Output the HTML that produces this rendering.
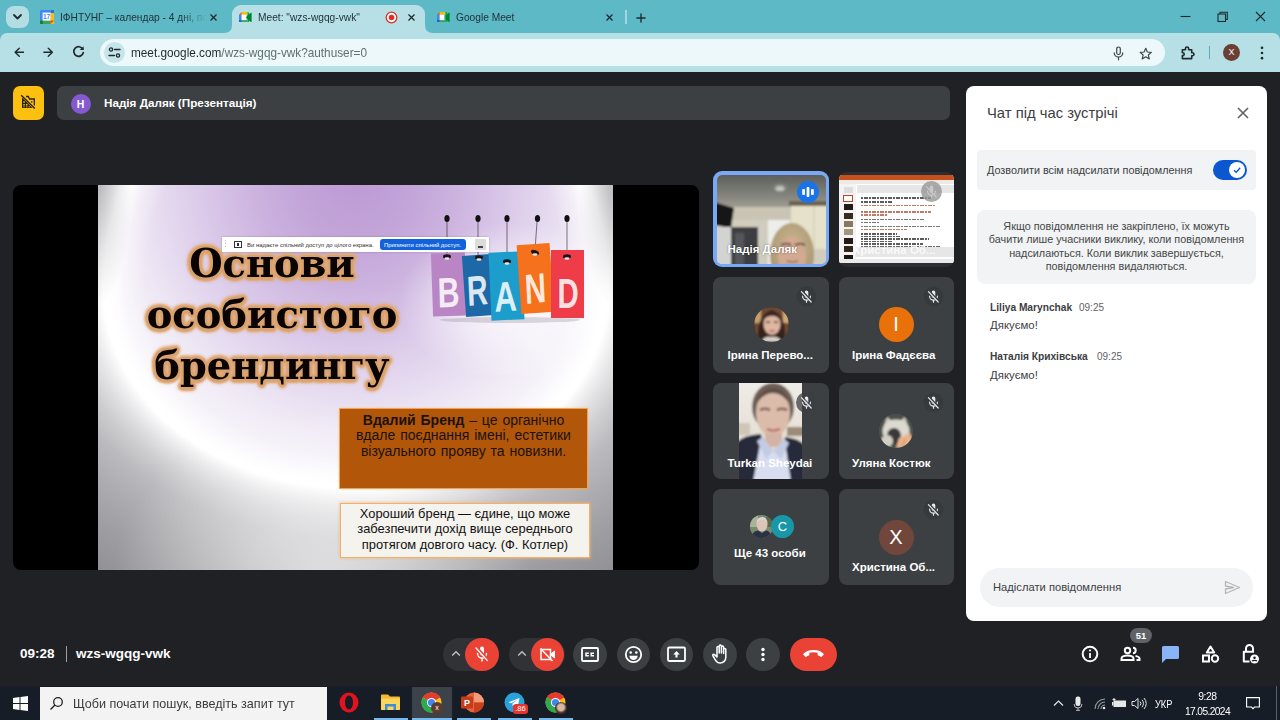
<!DOCTYPE html>
<html lang="uk"><head><meta charset="utf-8"><title>Meet</title>
<style>
*{box-sizing:border-box;margin:0;padding:0}
html,body{width:1280px;height:720px;overflow:hidden;background:#202124;font-family:"Liberation Sans","DejaVu Sans",sans-serif;}
.abs{position:absolute}
#tabstrip{left:0;top:0;width:1280px;height:44px;background:#5db9c5}
#toolbar{left:0;top:33px;width:1280px;height:39.500px;background:#b7e0e6;border-radius:7px 7px 0 0}
#acttab{left:232px;top:5px;width:193px;height:29px;background:#b7e0e6;border-radius:9px 9px 0 0}
#omni{left:100px;top:38.700px;width:1065px;height:27.300px;border-radius:14px;background:#ecf8f9}
.tabtxt{font-size:11.400px;line-height:14px;color:#22333a;top:9.800px;white-space:nowrap;transform:scaleX(0.895);transform-origin:0 0}
#meet{left:0;top:72px;width:1280px;height:615px;background:#202124}
#taskbar{left:0;top:686px;width:1280px;height:34px;background:#161d26}
.tile{background:#3c4043;border-radius:8px;overflow:hidden}
.tname{position:absolute;left:0;width:100%;text-align:center;color:#fff;font-size:12.5px;font-weight:bold;white-space:nowrap}
.mic{position:absolute;width:22px;height:22px;border-radius:50%;background:#2f3235}
.ttl{left:0;width:348px;text-align:center;font-family:"DejaVu Serif","Liberation Serif",serif;font-weight:bold;font-size:40px;line-height:51px;color:#0a0503;white-space:nowrap;transform:scaleX(.96);transform-origin:50% 50%;text-shadow:1.5px 0.0px 1.5px #d9a270,1.1px 1.1px 1.5px #d9a270,0.0px 1.5px 1.5px #d9a270,-1.1px 1.1px 1.5px #d9a270,-1.5px 0.0px 1.5px #d9a270,-1.1px -1.1px 1.5px #d9a270,-0.0px -1.5px 1.5px #d9a270,1.1px -1.1px 1.5px #d9a270,2.6px 0.0px 2px #dca776,2.1px 1.5px 2px #dca776,0.8px 2.5px 2px #dca776,-0.8px 2.5px 2px #dca776,-2.1px 1.5px 2px #dca776,-2.6px 0.0px 2px #dca776,-2.1px -1.5px 2px #dca776,-0.8px -2.5px 2px #dca776,0.8px -2.5px 2px #dca776,2.1px -1.5px 2px #dca776,3.5px 0.0px 3px rgba(226,178,134,.75),3.0px 1.7px 3px rgba(226,178,134,.75),1.8px 3.0px 3px rgba(226,178,134,.75),0.0px 3.5px 3px rgba(226,178,134,.75),-1.7px 3.0px 3px rgba(226,178,134,.75),-3.0px 1.7px 3px rgba(226,178,134,.75),-3.5px 0.0px 3px rgba(226,178,134,.75),-3.0px -1.7px 3px rgba(226,178,134,.75),-1.8px -3.0px 3px rgba(226,178,134,.75),-0.0px -3.5px 3px rgba(226,178,134,.75),1.8px -3.0px 3px rgba(226,178,134,.75),3.0px -1.8px 3px rgba(226,178,134,.75),0 0 7px rgba(226,180,140,.55)}
.nm{color:#fff;font-size:11.500px;line-height:14px;font-weight:bold;white-space:nowrap}
.ctx{font-size:10.800px;line-height:14px;color:#3c4043;white-space:nowrap}
.cb{top:637.800px;width:33.400px;height:33.400px;margin-left:.3px;border-radius:50%;background:#3c4043}
</style></head><body>
<!-- ===== browser chrome ===== -->
<div id="tabstrip" class="abs"></div>
<div id="toolbar" class="abs"></div>
<div id="acttab" class="abs"></div>
<div id="omni" class="abs"></div>

<!-- tab strip items -->
<div class="abs" style="left:6px;top:6px;width:23px;height:22px;border-radius:8px;background:#b3dde3"></div>
<svg class="abs" style="left:12px;top:13px" width="11" height="8" viewBox="0 0 11 8"><path d="M2 2 L5.5 5.5 L9 2" fill="none" stroke="#1f2a2d" stroke-width="1.8" stroke-linecap="round" stroke-linejoin="round"/></svg>
<!-- calendar favicon -->
<svg class="abs" style="left:40px;top:10px" width="14" height="14" viewBox="0 0 14 14"><rect x="0" y="0" width="14" height="14" rx="1.5" fill="#4285f4"/><rect x="0" y="10.5" width="14" height="3.5" fill="#34a853"/><rect x="10.5" y="0" width="3.5" height="14" fill="#fbbc04"/><rect x="0" y="10.5" width="3" height="3.5" fill="#188038"/><rect x="10.5" y="0" width="3.5" height="3" fill="#1a73e8"/><path d="M10.5 10.5h3.5l-3.5 3.5z" fill="#ea4335"/><rect x="2.6" y="2.6" width="8" height="8" fill="#fff"/><text x="6.6" y="9.3" font-size="6.5" font-weight="bold" fill="#4285f4" text-anchor="middle" font-family="Liberation Sans, sans-serif">17</text></svg>
<div class="abs tabtxt" id="t1" style="left:60px;width:164px;overflow:hidden;-webkit-mask-image:linear-gradient(90deg,#000 82%,transparent 100%)">ІФНТУНГ – календар - 4 дні, понеділок</div>
<svg class="abs" style="left:209px;top:13px" width="9" height="9" viewBox="0 0 9 9"><path d="M1.500 1.500L7.500 7.500M7.500 1.500L1.500 7.500" stroke="#1f2a2d" stroke-width="1.300"/></svg>
<!-- active tab curves -->
<svg class="abs" style="left:224px;top:25px" width="8" height="8" viewBox="0 0 8 8"><path d="M0 8 Q8 8 8 0 L8 8Z" fill="#b7e0e6"/></svg>
<svg class="abs" style="left:425px;top:25px" width="8" height="8" viewBox="0 0 8 8"><path d="M8 8 Q0 8 0 0 L0 8Z" fill="#b7e0e6"/></svg>
<!-- meet favicon -->
<svg class="abs meetfav" style="left:239px;top:11.500px" width="12.600" height="10.800" viewBox="0 0 14 12"><rect x="0" y="3" width="3" height="6" fill="#4285f4"/><path d="M0 3L3 0V3Z" fill="#ea4335"/><rect x="3" y="0" width="6.5" height="3" fill="#fbbc04"/><rect x="3" y="9" width="6.5" height="3" fill="#34a853"/><path d="M0 9h3v3H1a1 1 0 0 1-1-1z" fill="#1967d2"/><path d="M9.5 0v4l-1.5 2 1.5 2v4h1a.8.8 0 0 0 .8-.8V.8A.8.8 0 0 0 10.500z" fill="#00ac47"/><path d="M9.5 4L13.300.9q.7-.5.700.4v9.400q0 .9-.7.4L9.500 8l-1.800-2z" fill="#00832d"/><rect x="3" y="3" width="5" height="6" fill="#fff"/></svg>
<div class="abs tabtxt" id="t2" style="left:258px">Meet: "wzs-wgqg-vwk"</div>
<svg class="abs" style="left:385px;top:11px" width="13" height="13" viewBox="0 0 13 13"><circle cx="6.500" cy="6.500" r="5.300" fill="#fff" stroke="#d93025" stroke-width="1.300"/><circle cx="6.500" cy="6.500" r="2.800" fill="#d93025"/></svg>
<svg class="abs" style="left:407px;top:13px" width="9" height="9" viewBox="0 0 9 9"><path d="M1.500 1.500L7.500 7.500M7.500 1.500L1.500 7.500" stroke="#1f2a2d" stroke-width="1.300"/></svg>
<!-- tab 3 -->
<svg class="abs meetfav" style="left:437px;top:11.500px" width="12.600" height="10.800" viewBox="0 0 14 12"><rect x="0" y="3" width="3" height="6" fill="#4285f4"/><path d="M0 3L3 0V3Z" fill="#ea4335"/><rect x="3" y="0" width="6.500" height="3" fill="#fbbc04"/><rect x="3" y="9" width="6.500" height="3" fill="#34a853"/><path d="M0 9h3v3H1a1 1 0 0 1-1-1z" fill="#1967d2"/><path d="M9.500 0v12h1a.8.8 0 0 0 .8-.8V.8A.8.8 0 0 0 10.500 0z" fill="#00ac47"/><path d="M9.500 4L13.300.9q.7-.5.700.4v9.400q0 .9-.7.4L9.500 8z" fill="#00832d"/><rect x="3" y="3" width="5" height="6" fill="#fff"/></svg>
<div class="abs tabtxt" id="t3" style="left:456px">Google Meet</div>
<svg class="abs" style="left:605px;top:13px" width="9" height="9" viewBox="0 0 9 9"><path d="M1.500 1.500L7.500 7.500M7.500 1.500L1.500 7.500" stroke="#1f2a2d" stroke-width="1.300"/></svg>
<div class="abs" style="left:625px;top:10px;width:1.500px;height:14px;background:#a3d5dc"></div>
<svg class="abs" style="left:635.500px;top:12.500px" width="10" height="10" viewBox="0 0 11 11"><path d="M5.500 1V10M1 5.500H10" stroke="#1f2a2d" stroke-width="1.500" stroke-linecap="round"/></svg>
<!-- window controls -->
<svg class="abs" style="left:1180px;top:11px" width="11" height="11" viewBox="0 0 11 11"><path d="M0.500 5.500H10.500" stroke="#1f2a2d" stroke-width="1.100"/></svg>
<svg class="abs" style="left:1217px;top:11px" width="11" height="11" viewBox="0 0 11 11"><rect x="1" y="3" width="7.500" height="7.500" fill="none" stroke="#1f2a2d" stroke-width="1.100"/><path d="M3 3V1.200H10.300V8.500H8.500" fill="none" stroke="#1f2a2d" stroke-width="1.100"/></svg>
<svg class="abs" style="left:1255px;top:11px" width="11" height="11" viewBox="0 0 11 11"><path d="M1 1L10 10M10 1L1 10" stroke="#1f2a2d" stroke-width="1.100"/></svg>
<!-- toolbar items -->
<svg class="abs" style="left:13.500px;top:47px" width="10.500" height="10.500" viewBox="0 0 12 12"><path d="M11 6H1.500M6 1.300L1.300 6L6 10.700" fill="none" stroke="#1f2a2d" stroke-width="1.600" stroke-linecap="round" stroke-linejoin="round"/></svg>
<svg class="abs" style="left:42.500px;top:47px" width="10.500" height="10.500" viewBox="0 0 12 12"><path d="M1 6H10.500M6 1.300L10.700 6L6 10.700" fill="none" stroke="#1f2a2d" stroke-width="1.600" stroke-linecap="round" stroke-linejoin="round"/></svg>
<svg class="abs" style="left:72px;top:45px" width="13" height="13" viewBox="0 0 13 13"><path d="M10.800 4.200A4.800 4.800 0 1 0 11.300 7.500" fill="none" stroke="#1f2a2d" stroke-width="1.700" stroke-linecap="round"/><path d="M11.600 1.200V5H7.800Z" fill="#1f2a2d"/></svg>
<div class="abs" style="left:104px;top:42px;width:21px;height:21px;border-radius:50%;background:#c5e5ea"></div>
<svg class="abs" style="left:108px;top:46px" width="13" height="13" viewBox="0 0 13 13"><circle cx="3" cy="3.500" r="1.600" fill="none" stroke="#1f2a2d" stroke-width="1.300"/><path d="M6.500 3.500H12" stroke="#1f2a2d" stroke-width="1.400" stroke-linecap="round"/><circle cx="10" cy="9.500" r="1.600" fill="none" stroke="#1f2a2d" stroke-width="1.300"/><path d="M1 9.500H6.500" stroke="#1f2a2d" stroke-width="1.400" stroke-linecap="round"/></svg>
<div class="abs" id="url" style="left:131px;top:44.500px;font-size:13px;line-height:16px;color:#1f2a2d;white-space:nowrap;transform:scaleX(0.906);transform-origin:0 0">meet.google.com<span style="color:#5f6f73">/wzs-wgqg-vwk?authuser=0</span></div>
<!-- mic, star -->
<svg class="abs" style="left:1112.500px;top:46px" width="11" height="15" viewBox="0 0 11 15"><rect x="3.700" y="1" width="3.600" height="7.500" rx="1.800" fill="none" stroke="#39474a" stroke-width="1.200"/><path d="M1.200 6.800a4.300 4.300 0 0 0 8.600 0M5.500 11.200V13.800" fill="none" stroke="#39474a" stroke-width="1.200" stroke-linecap="round"/></svg>
<svg class="abs" style="left:1138.500px;top:46.500px" width="13.500" height="13.500" viewBox="0 0 15 15"><path d="M7.500 1.500L9.300 5.600L13.700 6L10.400 8.900L11.400 13.200L7.500 10.900L3.600 13.200L4.600 8.900L1.300 6L5.700 5.600Z" fill="none" stroke="#39474a" stroke-width="1.300" stroke-linejoin="round"/></svg>
<!-- extension puzzle -->
<svg class="abs" style="left:1180px;top:45px" width="15" height="15" viewBox="0 0 16 16"><path d="M2.500 5H5.800V3.800a1.700 1.700 0 0 1 3.400 0V5H12.500V8.200h.8a1.600 1.600 0 0 1 0 3.200H12.500V14.500H2.500V11.300h.5a1.500 1.500 0 0 0 0-3H2.500Z" fill="none" stroke="#1f2a2d" stroke-width="1.700" stroke-linejoin="round"/></svg>
<div class="abs" style="left:1209px;top:46px;width:1px;height:13px;background:#58aebb"></div>
<div class="abs" style="left:1223px;top:44px;width:17px;height:17px;border-radius:50%;background:#6b3f33;color:#fff;font-size:9px;line-height:17px;text-align:center">X</div>
<svg class="abs" style="left:1259.500px;top:46px" width="4" height="14" viewBox="0 0 4 15"><circle cx="2" cy="2" r="1.400" fill="#1f2a2d"/><circle cx="2" cy="7.500" r="1.400" fill="#1f2a2d"/><circle cx="2" cy="13" r="1.400" fill="#1f2a2d"/></svg>
<!-- ===== meet ===== -->
<div id="meet" class="abs"></div>

<!-- meet top bar -->
<div class="abs" style="left:13px;top:86px;width:31px;height:34px;border-radius:7px;background:#fcc011"></div>
<svg class="abs" style="left:20px;top:94px" width="17" height="16" viewBox="0 0 17 16"><path d="M2 3.500V14H12.500Z" fill="#2a2206"/><g fill="#fcc011"><rect x="3.300" y="7.300" width="1.500" height="1.500"/><rect x="3.300" y="10" width="1.500" height="1.500"/><rect x="6" y="10" width="1.500" height="1.500"/><rect x="3.300" y="12.400" width="1.500" height=".9"/><rect x="6" y="12.400" width="1.500" height=".9"/><rect x="8.600" y="12.400" width="1.500" height=".9"/></g><path d="M6 2.500H8.300L9.500 5H14.300V11.500" fill="none" stroke="#2a2206" stroke-width="1.300"/><rect x="11" y="7.200" width="1.400" height="1.400" fill="#2a2206"/><path d="M1.200 1.200L14.800 14.600" stroke="#2a2206" stroke-width="1.400"/></svg>
<div class="abs" style="left:57px;top:86px;width:893px;height:34px;border-radius:7px;background:#3c4043"></div>
<div class="abs" style="left:70.500px;top:93.500px;width:20px;height:20px;border-radius:50%;background:#8559cf;color:#fff;font-size:10.500px;font-weight:bold;line-height:20px;text-align:center">Н</div>
<div class="abs" id="pres" style="left:104px;top:96px;font-size:11.700px;font-weight:bold;color:#fff;white-space:nowrap;line-height:14px">Надія Даляк (Презентація)</div>
<!-- presentation tile -->
<div class="abs" id="ptile" style="left:13px;top:185px;width:686px;height:385px;border-radius:8px;background:#000;overflow:hidden">
<div class="abs" id="slide" style="left:85px;top:0;width:515px;height:385px;overflow:hidden;background:radial-gradient(ellipse 300px 330px at 258px -10px,#bc99d4 0%,#c3a5d9 20%,#ccb3df 34%,#d9c7e8 50%,#e6dbf0 66%,#f0eaf5 78%,#f7f4fa 90%,#fcfbfd 100%)">
<div class="abs" style="left:0;top:0;width:515px;height:105px;background:radial-gradient(ellipse 251px 282px at 258px 105px,rgba(255,255,255,0) 0%,rgba(255,255,255,0) 84%,rgba(255,255,255,.4) 92%,rgba(255,255,255,.88) 96.500%,#fff 98.500%,#fff 100.500%,#f2f2f3 104%,#e2e2e4 109%,#cfcfd2 116%,#bbbbbf 126%,#acacb0 140%,#9f9fa3 155%,#8e8d92 180%)"></div>
<div class="abs" style="left:0;top:105px;width:515px;height:280px;background:radial-gradient(ellipse 251px 198px at 258px 0px,rgba(255,255,255,0) 0%,rgba(255,255,255,0) 84%,rgba(255,255,255,.4) 92%,rgba(255,255,255,.88) 96.500%,#fff 98.500%,#fff 100.500%,#f2f2f3 104%,#e2e2e4 109%,#cfcfd2 116%,#bbbbbf 126%,#acacb0 140%,#9f9fa3 155%,#8e8d92 180%)"></div>
<div class="abs" style="left:0;top:0;width:515px;height:385px;background:radial-gradient(ellipse 210px 170px at 225px 395px,rgba(255,255,255,.62) 0%,rgba(255,255,255,.45) 35%,rgba(255,255,255,0) 100%),radial-gradient(ellipse 34px 120px at 0 0,rgba(90,90,100,.3) 0%,rgba(90,90,100,0) 100%),radial-gradient(ellipse 34px 120px at 515px 0,rgba(90,90,100,.3) 0%,rgba(90,90,100,0) 100%)"></div>
<!-- title -->
<div class="abs ttl" id="tl1" style="top:52px">Основи<br>особистого<br>брендингу</div>
<!-- brand image -->
<div class="abs" style="left:300px;top:30px;width:230px;height:160px;background:radial-gradient(ellipse 50% 50% at 50% 55%,rgba(255,255,255,.8) 0%,rgba(255,255,255,.55) 45%,rgba(255,255,255,0) 100%)"></div>
<svg class="abs" style="left:325px;top:25px" width="180" height="120" viewBox="423 210 180 120" font-family="Liberation Sans, sans-serif" font-weight="bold">
<g stroke="#2a2228" stroke-width="0.600"><path d="M447 222V256M478 222V258M507 222V262M537 222L535 250M567 222V256"/></g>
<g fill="#111"><ellipse cx="447" cy="218.500" rx="2.600" ry="3.600"/><ellipse cx="478" cy="218.500" rx="2.600" ry="3.600"/><ellipse cx="507" cy="218.500" rx="2.600" ry="3.600"/><ellipse cx="537.500" cy="218.500" rx="2.600" ry="3.600"/><ellipse cx="567" cy="218.500" rx="2.600" ry="3.600"/></g>
<ellipse cx="510" cy="320" rx="70" ry="3" fill="rgba(120,110,130,.25)"/>
<rect x="432" y="253" width="34" height="63" fill="#b985c5" transform="rotate(-2 449 285)"/>
<rect x="464" y="255" width="28" height="61" fill="#1d69a8" transform="rotate(-4 478 286)"/>
<rect x="490" y="252" width="33" height="68" fill="#1c9dcc" transform="rotate(-2.500 506 286)"/>
<rect x="519" y="244" width="33" height="69" fill="#f5711b" transform="rotate(-4 535 279)"/>
<rect x="551" y="250" width="33" height="68" fill="#ee3c48"/>
<g fill="#fff" fill-opacity=".86" font-size="42" text-anchor="middle">
<text transform="translate(449 307) scale(.72 1) rotate(-2)">B</text>
<text transform="translate(478 305) scale(.68 1) rotate(-4)">R</text>
<text transform="translate(506 311) scale(.74 1) rotate(-2.500)">A</text>
<text transform="translate(536 303) scale(.7 1) rotate(-4)">N</text>
<text transform="translate(568 308) scale(.7 1)">D</text>
</g>
<g fill="#1a1518"><ellipse cx="447" cy="256.500" rx="4" ry="2.300"/><ellipse cx="479" cy="257.500" rx="4" ry="2.300"/><ellipse cx="507" cy="261.500" rx="4" ry="2.300"/><ellipse cx="535" cy="252.500" rx="4.200" ry="2.300" transform="rotate(20 535 252.500)"/><ellipse cx="567" cy="256.500" rx="4" ry="2.300"/></g>
<g fill="#e8e4e8"><ellipse cx="447" cy="258.500" rx="2.600" ry="1.300"/><ellipse cx="479" cy="259.500" rx="2.600" ry="1.300"/><ellipse cx="507" cy="263.500" rx="2.600" ry="1.300"/><ellipse cx="535" cy="254.500" rx="2.600" ry="1.300"/><ellipse cx="567" cy="258.500" rx="2.600" ry="1.300"/></g>
</svg>
<!-- share bar -->
<div class="abs" style="left:124px;top:52px;width:267px;height:15px;background:#fff;box-shadow:0 0 2px rgba(0,0,0,.25)"></div>
<div class="abs" style="left:136px;top:56px;width:8px;height:6.500px;border:1px solid #333"></div><div class="abs" style="left:139px;top:58px;width:2px;height:2.500px;background:#333"></div><div class="abs" style="left:127px;top:55px;width:1px;height:9px;background:repeating-linear-gradient(180deg,#bbb 0 1px,transparent 1px 3px)"></div>
<div class="abs" id="sh1" style="left:149px;top:55.500px;font-size:5.950px;line-height:8px;color:#333;white-space:nowrap">Ви надаєте спільний доступ до цілого екрана.</div>
<div class="abs" style="left:282px;top:54px;width:86px;height:11px;border-radius:3px;background:#1263db"></div>
<div class="abs" id="sh2" style="left:286px;top:55.500px;font-size:5.900px;line-height:8px;color:#fff;white-space:nowrap">Припинити спільний доступ.</div>
<div class="abs" style="left:377px;top:54px;width:11px;height:11px;background:#dcdcdc;border-radius:1px"></div>
<div class="abs" style="left:380px;top:61px;width:5px;height:1.500px;background:#444"></div>
<!-- brown box -->
<div class="abs" style="left:242px;top:224px;width:247px;height:79px;background:#b2570a;box-shadow:0 0 0 1px #f0a452,0 0 3px #f3b46e"></div>
<div class="abs" id="bx1" style="left:247px;top:227.500px;width:237px;font-size:14px;line-height:15.600px;color:#1a120b;word-spacing:1px;text-align:center;white-space:nowrap"><b>Вдалий Бренд</b> – це органічно<br>вдале поєднання імені, естетики<br>візуального прояву та новизни.</div>
<!-- white box -->
<div class="abs" style="left:242px;top:318px;width:250px;height:55px;background:#f4f3ee;border:1.500px solid #f0b170;box-shadow:0 0 3px #f3b46e"></div>
<div class="abs" id="bx2" style="left:252px;top:321px;width:230px;font-size:12.900px;line-height:15.300px;color:#111;text-align:center;white-space:nowrap">Хороший бренд — єдине, що може<br>забезпечити дохід вище середнього<br>протягом довгого часу. (Ф. Котлер)</div>
</div>
</div>
<!-- ===== tiles ===== -->
<!-- tile 1: Nadia video -->
<div class="abs tile" style="left:713px;top:171px;width:116px;height:96px;border-radius:9px;background:#78a8f6">
 <div class="abs" style="left:3.500px;top:3.500px;width:109px;height:89px;border-radius:5px;overflow:hidden;background:#d8d3c2">
 <svg class="abs" style="left:-3px;top:-3px" width="115" height="95" viewBox="-3 -3 115 95">
  <defs><linearGradient id="ceil" x1="0" y1="0" x2="0" y2="1"><stop offset="0" stop-color="#585a56"/><stop offset=".55" stop-color="#7b7d76"/><stop offset="1" stop-color="#9f9e94"/></linearGradient>
  <filter id="bl1" x="-5%" y="-5%" width="110%" height="110%"><feGaussianBlur stdDeviation="0.9"/></filter>
  <radialGradient id="hair1" cx=".5" cy=".4" r=".6"><stop offset="0" stop-color="#cdb994"/><stop offset="1" stop-color="#a8946f"/></radialGradient></defs>
  <g filter="url(#bl1)">
  <rect x="-3" y="-3" width="115" height="95" fill="#d2cdbc"/>
  <rect x="-3" y="-3" width="115" height="36" fill="url(#ceil)"/>
  <path d="M14 32H74V45H14Z" fill="#c9c4b3"/>
  <ellipse cx="63" cy="13" rx="7.500" ry="4.800" fill="#7f827b"/><ellipse cx="63" cy="13.500" rx="4.500" ry="2.600" fill="#c2c4bb"/>
  <path d="M-3 27L17 33L14 53L-3 50Z" fill="#121214"/>
  <rect x="72" y="26" width="40" height="5" fill="#6d624f"/>
  <rect x="74" y="31" width="38" height="43" fill="#e5e1ca"/>
  <path d="M97 31V74" stroke="#cfcab2" stroke-width="1"/>
  <rect x="74" y="74" width="38" height="18" fill="#d0cdbf"/>
  <rect x="-3" y="52" width="17" height="40" fill="#d3d4d1"/>
  <rect x="14" y="52" width="27" height="40" fill="#3c3d42"/>
  <rect x="18" y="58" width="9" height="34" fill="#55565c"/>
  <rect x="41" y="45" width="10" height="47" fill="#cfccc0"/>
  <rect x="51" y="45" width="22" height="47" fill="#ededea"/>
  <ellipse cx="75" cy="80" rx="22" ry="32" fill="url(#hair1)"/>
  <ellipse cx="75" cy="82" rx="14" ry="20" fill="#d2a991"/>
  <path d="M64 70Q69 67.500 74 70M78 70Q83 67.500 88 70" stroke="#6b5044" stroke-width="2" fill="none"/>
  <path d="M70 86Q75 88 81 86" stroke="#9c6b60" stroke-width="1.500" fill="none"/>
  </g>
 </svg>
 </div>
 <svg class="abs" style="left:83.500px;top:10px" width="22" height="22" viewBox="0 0 22 22"><circle cx="11" cy="11" r="11" fill="#1a73e8"/><rect x="5.200" y="8" width="2.800" height="6" rx="1" fill="#fff"/><rect x="9.600" y="6" width="2.800" height="10" rx="1" fill="#fff"/><rect x="14" y="8" width="2.800" height="6" rx="1" fill="#fff"/></svg>
 <div class="abs nm" id="n1" style="left:14.500px;top:71.200px;text-shadow:0 0 2px rgba(0,0,0,.5)">Надія Даляк</div>
</div>
<!-- tile 2: screen share thumb -->
<div class="abs tile" style="left:839px;top:172px;width:115px;height:95px;background:#2c2e31">
 <div class="abs" style="left:0;top:3px;width:115px;height:88px;background:#fff;overflow:hidden">
  <div class="abs" style="left:0;top:0;width:115px;height:5px;background:#c5501e"></div>
  <div class="abs" style="left:0;top:5px;width:115px;height:4px;background:#efe9e6"></div>
  <div class="abs" style="left:18px;top:10px;width:97px;height:8px;background:#e6e6e6"></div>
  <div class="abs" style="left:0;top:9px;width:17px;height:79px;background:#f3f3f3"></div>
  <div class="abs" style="left:5px;top:12px;width:9px;height:6px;background:#ddd"></div>
  <div class="abs" style="left:4px;top:20px;width:10px;height:7px;background:#fff;border:1px solid #b5482a"></div>
  <div class="abs" style="left:5px;top:29px;width:9px;height:6px;background:#221a15"></div>
  <div class="abs" style="left:5px;top:38px;width:9px;height:6px;background:#3a2a1c"></div>
  <div class="abs" style="left:5px;top:46px;width:9px;height:6px;background:#8a7763"></div>
  <div class="abs" style="left:5px;top:54px;width:9px;height:6px;background:#a39480"></div>
  <div class="abs" style="left:5px;top:63px;width:9px;height:6px;background:#241c14"></div>
  <div class="abs" style="left:5px;top:71px;width:9px;height:6px;background:#33271c"></div>
  <div class="abs" style="left:5px;top:80px;width:9px;height:5px;background:#1c1612"></div>
  <div class="abs" style="left:22px;top:22px;width:70px;height:2px;background:repeating-linear-gradient(90deg,#333 0 2.500px,transparent 2.500px 3.500px,#333 3.500px 7px,transparent 7px 8px);opacity:.8"></div>
  <div class="abs" style="left:22px;top:26px;width:32px;height:2px;background:repeating-linear-gradient(90deg,#333 0 2.500px,transparent 2.500px 3.500px,#333 3.500px 7px,transparent 7px 8px);opacity:.8"></div>
  <div class="abs" style="left:22px;top:29.500px;width:74px;height:1.500px;background:repeating-linear-gradient(90deg,#b4553f 0 2.500px,transparent 2.500px 3.500px,#b4553f 3.500px 7px,transparent 7px 8px);opacity:.8"></div>
  <div class="abs" style="left:22px;top:36px;width:70px;height:1.500px;background:repeating-linear-gradient(90deg,#b4553f 0 2.500px,transparent 2.500px 3.500px,#b4553f 3.500px 7px,transparent 7px 8px);opacity:.8"></div>
  <div class="abs" style="left:22px;top:39px;width:26px;height:1.500px;background:repeating-linear-gradient(90deg,#b4553f 0 2.500px,transparent 2.500px 3.500px,#b4553f 3.500px 7px,transparent 7px 8px);opacity:.8"></div>
  <div class="abs" style="left:22px;top:43.500px;width:64px;height:1.500px;background:repeating-linear-gradient(90deg,#555 0 2.500px,transparent 2.500px 3.500px,#555 3.500px 7px,transparent 7px 8px);opacity:.8"></div>
  <div class="abs" style="left:22px;top:46.500px;width:18px;height:1.500px;background:repeating-linear-gradient(90deg,#555 0 2.500px,transparent 2.500px 3.500px,#555 3.500px 7px,transparent 7px 8px);opacity:.8"></div>
  <div class="abs" style="left:22px;top:50.500px;width:80px;height:1.500px;background:repeating-linear-gradient(90deg,#555 0 2.500px,transparent 2.500px 3.500px,#555 3.500px 7px,transparent 7px 8px);opacity:.8"></div>
  <div class="abs" style="left:22px;top:53.500px;width:46px;height:1.500px;background:repeating-linear-gradient(90deg,#b4553f 0 2.500px,transparent 2.500px 3.500px,#b4553f 3.500px 7px,transparent 7px 8px);opacity:.8"></div>
  <div class="abs" style="left:22px;top:58px;width:36px;height:1.500px;background:repeating-linear-gradient(90deg,#333 0 2.500px,transparent 2.500px 3.500px,#333 3.500px 7px,transparent 7px 8px);opacity:.8"></div>
  <div class="abs" style="left:22px;top:60.500px;width:40px;height:1.500px;background:repeating-linear-gradient(90deg,#333 0 2.500px,transparent 2.500px 3.500px,#333 3.500px 7px,transparent 7px 8px);opacity:.8"></div>
  <div class="abs" style="left:22px;top:63px;width:68px;height:1.500px;background:repeating-linear-gradient(90deg,#333 0 2.500px,transparent 2.500px 3.500px,#333 3.500px 7px,transparent 7px 8px);opacity:.8"></div>
  <div class="abs" style="left:22px;top:65.500px;width:32px;height:1.500px;background:repeating-linear-gradient(90deg,#333 0 2.500px,transparent 2.500px 3.500px,#333 3.500px 7px,transparent 7px 8px);opacity:.8"></div>
  <div class="abs" style="left:22px;top:68px;width:62px;height:1.500px;background:repeating-linear-gradient(90deg,#333 0 2.500px,transparent 2.500px 3.500px,#333 3.500px 7px,transparent 7px 8px);opacity:.8"></div>
  <div class="abs" style="left:22px;top:70.500px;width:80px;height:1.500px;background:repeating-linear-gradient(90deg,#444 0 2.500px,transparent 2.500px 3.500px,#444 3.500px 7px,transparent 7px 8px);opacity:.8"></div>
  <div class="abs" style="left:17px;top:72px;width:98px;height:10px;background:rgba(225,225,225,.82)"></div>
  <div class="abs" style="left:0;top:84px;width:115px;height:4px;background:#e9e9e9"></div>
 </div>
 <svg class="abs" style="left:81.7px;top:8.7px" width="21" height="21" viewBox="0 0 21 21"><circle cx="10.500" cy="10.500" r="10.500" fill="rgba(150,150,150,.8)"/><path d="M8.700 6.300a1.800 1.800 0 0 1 3.600 0v4a1.800 1.800 0 0 1-3.600 0z" fill="#c9c9c9"/><path d="M6.600 10.200a3.900 3.900 0 0 0 7.800 0M10.500 14.200V16.200" fill="none" stroke="#c9c9c9" stroke-width="1.200" stroke-linecap="round"/><path d="M5.400 5.600L15.200 16" stroke="#c9c9c9" stroke-width="1.200" stroke-linecap="round"/></svg>
 <div class="abs nm" id="n2" style="left:13.500px;top:70.500px;color:rgba(255,255,255,.78)">Христина Об...</div>
</div>
<!-- tile 3 -->
<div class="abs tile" style="left:713px;top:277px;width:116px;height:96px">
 <div class="abs" style="left:40.500px;top:30px;width:35px;height:35px;border-radius:50%;overflow:hidden;background:#3a2620">
 <svg class="abs" style="left:0;top:0" width="35" height="35" viewBox="0 0 35 35"><defs><filter id="bl3"><feGaussianBlur stdDeviation="0.900"/></filter></defs>
 <g filter="url(#bl3)"><rect width="35" height="35" fill="#6e4c36"/>
 <rect x="0" y="0" width="7" height="16" fill="#c8a06b"/><rect x="29" y="2" width="6" height="14" fill="#d1ab72"/>
 <path d="M4 35Q2 8 17 3Q33 6 31 35Z" fill="#35231e"/>
 <ellipse cx="18" cy="17" rx="8.500" ry="11" fill="#dfb7a3"/>
 <path d="M9 14Q11 4 19 5Q27 5 27 15Q24 8 18 9Q12 9 9 14Z" fill="#3b2721"/>
 <path d="M12 15.500Q14 14.500 16 15.500M20 15.500Q22 14.500 24 15.500" stroke="#4a3029" stroke-width="1.500" fill="none"/>
 <path d="M15.500 23.500Q18 24.500 20.500 23.500" stroke="#b0605f" stroke-width="1.400" fill="none"/>
 <path d="M7 35Q10 29 17 30Q25 29 28 35Z" fill="#d7cfc6"/>
 </g></svg>
 </div>
 <svg class="abs" style="left:83.2px;top:9.2px" width="21" height="21" viewBox="0 0 21 21"><circle cx="10.500" cy="10.500" r="10" fill="#373a3d"/><path d="M8.700 6.300a1.800 1.800 0 0 1 3.600 0v4a1.800 1.800 0 0 1-3.600 0z" fill="#e8eaed"/><path d="M6.600 10.200a3.900 3.900 0 0 0 7.800 0M10.500 14.200V16.200" fill="none" stroke="#e8eaed" stroke-width="1.200" stroke-linecap="round"/><path d="M5.800 5.200L15.600 15.600" stroke="#373a3d" stroke-width="2.600"/><path d="M5.400 5.600L15.200 16" stroke="#e8eaed" stroke-width="1.200" stroke-linecap="round"/></svg>
 <div class="abs nm" id="n3" style="left:14.500px;top:71px">Ірина Перево...</div>
</div>
<!-- tile 4 -->
<div class="abs tile" style="left:839px;top:277px;width:115px;height:96px">
 <div class="abs" style="left:39.500px;top:30px;width:35px;height:35px;border-radius:50%;background:#e8710a;color:#fff;font-size:20px;line-height:35px;text-align:center">І</div>
 <svg class="abs" style="left:83.7px;top:9.2px" width="21" height="21" viewBox="0 0 21 21"><circle cx="10.500" cy="10.500" r="10" fill="#373a3d"/><path d="M8.700 6.300a1.800 1.800 0 0 1 3.600 0v4a1.800 1.800 0 0 1-3.600 0z" fill="#e8eaed"/><path d="M6.600 10.200a3.900 3.900 0 0 0 7.800 0M10.500 14.200V16.200" fill="none" stroke="#e8eaed" stroke-width="1.200" stroke-linecap="round"/><path d="M5.800 5.200L15.600 15.600" stroke="#373a3d" stroke-width="2.600"/><path d="M5.400 5.600L15.200 16" stroke="#e8eaed" stroke-width="1.200" stroke-linecap="round"/></svg>
 <div class="abs nm" id="n4" style="left:13px;top:71px">Ірина Фадєєва</div>
</div>
<!-- tile 5: Turkan video -->
<div class="abs tile" style="left:713px;top:383px;width:116px;height:96px">
 <div class="abs" style="left:26px;top:0;width:63px;height:96px;overflow:hidden;background:#e8e5df">
 <svg class="abs" style="left:-3px;top:-3px" width="69" height="102" viewBox="-3 -3 69 102">
  <defs><filter id="bl5" x="-10%" y="-10%" width="120%" height="120%"><feGaussianBlur stdDeviation="1.300"/></filter>
  <linearGradient id="bg5" x1="0" y1="0" x2="0" y2="1"><stop offset="0" stop-color="#efede8"/><stop offset=".5" stop-color="#e6e1d8"/><stop offset="1" stop-color="#d8d0c4"/></linearGradient></defs>
  <g filter="url(#bl5)">
  <rect x="-3" y="-3" width="69" height="102" fill="url(#bg5)"/>
  <rect x="48" y="44" width="18" height="9" fill="#9b8b78"/>
  <rect x="-3" y="40" width="14" height="12" fill="#cfc6b8"/>
  <ellipse cx="34" cy="24" rx="21" ry="24" fill="#6e5f57"/>
  <ellipse cx="34" cy="30" rx="17" ry="24" fill="#dbbcab"/>
  <path d="M17 22Q20 6 34 5Q48 6 51 22Q44 10 34 10Q24 10 17 22Z" fill="#5f5049"/>
  <path d="M21 27Q26 24.500 31 27M38 27Q43 24.500 48 27" stroke="#6a4f46" stroke-width="2.600" fill="none" opacity=".8"/>
  <path d="M28 46Q34 49 41 46" stroke="#b4696b" stroke-width="2.200" fill="none"/>
  <rect x="26" y="50" width="17" height="14" fill="#d3b3a3"/>
  <path d="M-3 60Q4 52 22 51L30 99H-3Z" fill="#262b3a"/>
  <path d="M66 62Q58 55 46 54L40 99H66Z" fill="#262b3a"/>
  <path d="M22 56L34 70L46 58L52 99H14Z" fill="#d8def0"/>
  <path d="M24 54L34 68L27 76L18 58Z" fill="#c3cbe4"/><path d="M45 56L34 68L42 76L50 60Z" fill="#c3cbe4"/>
  </g>
 </svg>
 </div>
 <svg class="abs" style="left:83.2px;top:9.2px" width="21" height="21" viewBox="0 0 21 21"><circle cx="10.500" cy="10.500" r="10.500" fill="rgba(60,62,66,.75)"/><path d="M8.700 6.300a1.800 1.800 0 0 1 3.600 0v4a1.800 1.800 0 0 1-3.600 0z" fill="#e8eaed"/><path d="M6.600 10.200a3.900 3.900 0 0 0 7.800 0M10.500 14.200V16.200" fill="none" stroke="#e8eaed" stroke-width="1.200" stroke-linecap="round"/><path d="M5.800 5.200L15.600 15.600" stroke="rgba(60,62,66,.75)" stroke-width="2.600"/><path d="M5.400 5.600L15.200 16" stroke="#e8eaed" stroke-width="1.200" stroke-linecap="round"/></svg>
 <div class="abs nm" id="n5" style="left:14.500px;top:72.500px">Turkan Sheydai</div>
</div>
<!-- tile 6 -->
<div class="abs tile" style="left:839px;top:383px;width:115px;height:96px">
 <div class="abs" style="left:39.500px;top:31px;width:34px;height:34px;border-radius:50%;overflow:hidden;background:#4a4f49">
 <svg class="abs" style="left:0;top:0" width="34" height="34" viewBox="0 0 34 34"><defs><filter id="bl6"><feGaussianBlur stdDeviation="0.900"/></filter></defs>
 <g filter="url(#bl6)"><rect width="34" height="34" fill="#4b504a"/>
 <path d="M5 12L8 3L14 8Z" fill="#cfcdc3"/><path d="M29 12L26 3L20 8Z" fill="#cfcdc3"/>
 <ellipse cx="17" cy="17" rx="13.500" ry="11.500" fill="#dcdad0"/>
 <ellipse cx="15" cy="22" rx="7" ry="8" fill="#3b3937"/>
 <ellipse cx="8" cy="27" rx="6" ry="6" fill="#d2d0c6"/>
 <path d="M17 34L20 24L31 19L34 26V34Z" fill="#ebb48c"/>
 <path d="M23 34L26 25" stroke="#c98f6c" stroke-width="1.200"/>
 </g></svg>
 </div>
 <svg class="abs" style="left:83.7px;top:9.2px" width="21" height="21" viewBox="0 0 21 21"><circle cx="10.500" cy="10.500" r="10" fill="#373a3d"/><path d="M8.700 6.300a1.800 1.800 0 0 1 3.600 0v4a1.800 1.800 0 0 1-3.600 0z" fill="#e8eaed"/><path d="M6.600 10.200a3.900 3.900 0 0 0 7.800 0M10.500 14.200V16.200" fill="none" stroke="#e8eaed" stroke-width="1.200" stroke-linecap="round"/><path d="M5.800 5.200L15.600 15.600" stroke="#373a3d" stroke-width="2.600"/><path d="M5.400 5.600L15.200 16" stroke="#e8eaed" stroke-width="1.200" stroke-linecap="round"/></svg>
 <div class="abs nm" id="n6" style="left:13px;top:72.500px">Уляна Костюк</div>
</div>
<!-- tile 7 -->
<div class="abs tile" style="left:713px;top:489px;width:116px;height:96px">
 <div class="abs" style="left:36.500px;top:25.500px;width:23px;height:23px;border-radius:50%;overflow:hidden;background:#6d7a5c">
 <svg class="abs" style="left:0;top:0" width="23" height="23" viewBox="0 0 23 23"><defs><filter id="bl7"><feGaussianBlur stdDeviation="0.700"/></filter></defs>
 <g filter="url(#bl7)"><rect width="23" height="23" fill="#7c8a6c"/><rect x="0" y="0" width="8" height="12" fill="#a9b39a"/><rect x="16" y="2" width="7" height="10" fill="#5c6b4c"/>
 <ellipse cx="12" cy="9.500" rx="5.500" ry="7" fill="#ddc4b6"/>
 <path d="M6.500 8Q7 2 12 2Q17 2 17.500 8Q15 4.500 12 4.500Q9 4.500 6.500 8Z" fill="#d6d6d4"/>
 <path d="M1 23Q2 16 8 15.500L12 18L16 15.500Q21 16 22 23Z" fill="#2a3146"/>
 </g></svg>
 </div>
 <div class="abs" style="left:58px;top:25.500px;width:23px;height:23px;border-radius:50%;background:#1797a8;color:#fff;font-size:13px;line-height:23px;text-align:center">С</div>
 <div class="abs nm" id="n7" style="left:21px;top:57.200px">Ще 43 особи</div>
</div>
<!-- tile 8 -->
<div class="abs tile" style="left:839px;top:489px;width:115px;height:96px">
 <div class="abs" style="left:39.500px;top:31px;width:35px;height:35px;border-radius:50%;background:#70473a;color:#fff;font-size:20px;line-height:35px;text-align:center">Х</div>
 <svg class="abs" style="left:83.7px;top:9.7px" width="21" height="21" viewBox="0 0 21 21"><circle cx="10.500" cy="10.500" r="10" fill="#373a3d"/><path d="M8.700 6.300a1.800 1.800 0 0 1 3.600 0v4a1.800 1.800 0 0 1-3.600 0z" fill="#e8eaed"/><path d="M6.600 10.200a3.900 3.900 0 0 0 7.800 0M10.500 14.200V16.200" fill="none" stroke="#e8eaed" stroke-width="1.200" stroke-linecap="round"/><path d="M5.800 5.200L15.600 15.600" stroke="#373a3d" stroke-width="2.600"/><path d="M5.400 5.600L15.200 16" stroke="#e8eaed" stroke-width="1.200" stroke-linecap="round"/></svg>
 <div class="abs nm" id="n8" style="left:13px;top:71.200px">Христина Об...</div>
</div>

<!-- ===== chat ===== -->
<div class="abs" style="left:966px;top:85.600px;width:301px;height:535.600px;border-radius:8px;background:#fff"></div>
<div class="abs" id="ct" style="left:987px;top:104px;font-size:14.800px;line-height:18px;color:#3c4043;white-space:nowrap">Чат під час зустрічі</div>
<svg class="abs" style="left:1237px;top:107px" width="12" height="12" viewBox="0 0 12 12"><path d="M1 1L11 11M11 1L1 11" stroke="#5f6368" stroke-width="1.600"/></svg>
<div class="abs" style="left:977px;top:150px;width:279px;height:40px;border-radius:4px;background:#f1f3f4"></div>
<div class="abs ctx" id="c1" style="left:987px;top:163px">Дозволити всім надсилати повідомлення</div>
<div class="abs" style="left:1213px;top:160px;width:34px;height:20px;border-radius:10px;background:#0b57d0"></div>
<div class="abs" style="left:1229px;top:162px;width:16px;height:16px;border-radius:50%;background:#fff"></div>
<svg class="abs" style="left:1232px;top:165px" width="10" height="10" viewBox="0 0 10 10"><path d="M2 5.200L4.200 7.300L8.200 2.800" fill="none" stroke="#0b57d0" stroke-width="1.300"/></svg>
<div class="abs" style="left:977px;top:210px;width:279px;height:74px;border-radius:8px;background:#f1f3f4"></div>
<div class="abs ctx" id="c2" style="left:977px;top:220px;width:279px;text-align:center;line-height:13.400px;color:#444746">Якщо повідомлення не закріплено, їх можуть<br>бачити лише учасники виклику, коли повідомлення<br>надсилаються. Коли виклик завершується,<br>повідомлення видаляються.</div>
<div class="abs ctx" id="m1" style="left:990px;top:301px;font-size:10.200px;font-weight:bold;color:#3c4043">Liliya Marynchak</div>
<div class="abs ctx" id="m1t" style="left:1079px;top:301px;font-size:10px;color:#5f6368">09:25</div>
<div class="abs ctx" id="m2" style="left:990px;top:318px;font-size:11.400px;color:#3c4043">Дякуємо!</div>
<div class="abs ctx" id="m3" style="left:990px;top:350px;font-size:10.200px;font-weight:bold;color:#3c4043">Наталія Крихівська</div>
<div class="abs ctx" id="m3t" style="left:1097px;top:350px;font-size:10px;color:#5f6368">09:25</div>
<div class="abs ctx" id="m4" style="left:990px;top:367.500px;font-size:11.400px;color:#3c4043">Дякуємо!</div>
<div class="abs" style="left:980px;top:568px;width:273px;height:39px;border-radius:20px;background:#f1f3f4"></div>
<div class="abs" id="ph" style="left:993px;top:580px;font-size:11.200px;line-height:14px;color:#3c4043;white-space:nowrap">Надіслати повідомлення</div>
<svg class="abs" style="left:1224px;top:580px" width="17" height="15" viewBox="0 0 17 15"><path d="M1.500 1.500L15.500 7.500L1.500 13.500V9L9.500 7.500L1.500 6Z" fill="none" stroke="#b4b7ba" stroke-width="1.300" stroke-linejoin="round"/></svg>

<!-- ===== controls ===== -->
<div class="abs" id="clk" style="left:20px;top:646px;font-size:13.500px;line-height:16px;font-weight:bold;color:#fff;white-space:nowrap">09:28</div>
<div class="abs" style="left:65.500px;top:646px;width:1px;height:16px;background:#9aa0a6"></div>
<div class="abs" id="code" style="left:76px;top:646px;font-size:13.500px;line-height:16px;font-weight:bold;color:#fff;white-space:nowrap">wzs-wgqg-vwk</div>
<!-- mic group -->
<div class="abs" style="left:443px;top:638px;width:56px;height:33px;border-radius:17px;background:#303236"></div>
<svg class="abs" style="left:451px;top:650px" width="10" height="7" viewBox="0 0 10 7"><path d="M1.200 5.500L5 1.700L8.800 5.500" fill="none" stroke="#bdc1c6" stroke-width="1.400"/></svg>
<div class="abs" style="left:465.300px;top:637.800px;width:33.400px;height:33.400px;border-radius:50%;background:#ea4335"></div>
<svg class="abs" style="left:473px;top:645px" width="18" height="19" viewBox="0 0 18 19"><path d="M7 3.500a2 2 0 0 1 4 0v5a2 2 0 0 1-4 0z" fill="#fff"/><path d="M4.500 8.500a4.500 4.500 0 0 0 9 0M9 13.200V16" fill="none" stroke="#fff" stroke-width="1.400" stroke-linecap="round"/><path d="M3.600 2.600L14.800 15" stroke="#ea4335" stroke-width="3"/><path d="M3 3L14.200 15.400" stroke="#fff" stroke-width="1.400" stroke-linecap="round"/></svg>
<!-- cam group -->
<div class="abs" style="left:509px;top:638px;width:56px;height:33px;border-radius:17px;background:#303236"></div>
<svg class="abs" style="left:516.500px;top:650px" width="10" height="7" viewBox="0 0 10 7"><path d="M1.200 5.500L5 1.700L8.800 5.500" fill="none" stroke="#bdc1c6" stroke-width="1.400"/></svg>
<div class="abs" style="left:530.800px;top:637.800px;width:33.400px;height:33.400px;border-radius:50%;background:#ea4335"></div>
<svg class="abs" style="left:538px;top:646px" width="19" height="17" viewBox="0 0 19 17"><path d="M3 3.500H12.500V13.500H3Z" fill="none" stroke="#fff" stroke-width="1.500"/><path d="M12.500 8.500L16.500 5V12Z" fill="#fff" stroke="#fff" stroke-width="1" stroke-linejoin="round"/><path d="M2.500 2.500L14.500 15" stroke="#fff" stroke-width="1.500"/></svg>
<!-- cc -->
<div class="abs cb" style="left:573px"></div>
<svg class="abs" style="left:581px;top:647px" width="18" height="15" viewBox="0 0 18 15"><rect x="1" y="1" width="16" height="13" rx="1" fill="none" stroke="#fff" stroke-width="1.800"/><path d="M7.800 6.200H5V8.800H7.800M13 6.200H10.200V8.800H13" fill="none" stroke="#fff" stroke-width="1.500"/></svg>
<!-- emoji -->
<div class="abs cb" style="left:616.500px"></div>
<svg class="abs" style="left:624px;top:645px" width="19" height="19" viewBox="0 0 19 19"><circle cx="9.500" cy="9.500" r="7.700" fill="none" stroke="#fff" stroke-width="1.800"/><circle cx="6.700" cy="7.500" r="1.300" fill="#fff"/><circle cx="12.300" cy="7.500" r="1.300" fill="#fff"/><path d="M5.300 10.800H13.700A4.200 4.200 0 0 1 5.300 10.800Z" fill="#fff"/></svg>
<!-- present -->
<div class="abs cb" style="left:659.500px"></div>
<svg class="abs" style="left:667px;top:646px" width="19" height="17" viewBox="0 0 19 17"><rect x="1" y="1.500" width="17" height="13.500" rx="1.200" fill="none" stroke="#fff" stroke-width="1.800"/><path d="M9.500 5L12.800 8.500H10.600V11.500H8.400V8.500H6.200Z" fill="#fff"/></svg>
<!-- hand -->
<div class="abs cb" style="left:703px"></div>
<svg class="abs" style="left:711px;top:644px" width="18" height="21" viewBox="0 0 18 21"><path d="M6 10V3.500a1.100 1.100 0 0 1 2.200 0V9V2.200a1.100 1.100 0 0 1 2.200 0V9V3a1.100 1.100 0 0 1 2.200 0V9.500V5.500a1.100 1.100 0 0 1 2.200 0V13.500a5.500 5.500 0 0 1-5.500 5.500c-2.600 0-3.900-1.200-5-3.200L1.800 11.500c-.4-.8.800-1.700 1.700-.9L6 13Z" fill="none" stroke="#fff" stroke-width="1.500" stroke-linejoin="round"/></svg>
<!-- more -->
<div class="abs cb" style="left:746px"></div>
<svg class="abs" style="left:761px;top:646px" width="4" height="17" viewBox="0 0 4 17"><circle cx="2" cy="3.500" r="1.700" fill="#fff"/><circle cx="2" cy="8.500" r="1.700" fill="#fff"/><circle cx="2" cy="13.500" r="1.700" fill="#fff"/></svg>
<!-- hangup -->
<div class="abs" style="left:790px;top:637.800px;width:46.500px;height:33.400px;border-radius:17px;background:#ea4335"></div>
<svg class="abs" style="left:802px;top:649px" width="23" height="10" viewBox="0 0 23 10"><path d="M11.500 1C7 1 3.200 2.600 1 5.200L3.800 8.300C4.800 7.300 6 6.600 7.300 6.200V3.800C8.600 3.400 10 3.200 11.500 3.200S14.400 3.400 15.700 3.800V6.200C17 6.600 18.200 7.300 19.200 8.300L22 5.200C19.800 2.600 16 1 11.500 1Z" fill="#fff"/></svg>
<!-- right icons -->
<svg class="abs" style="left:1081px;top:645px" width="18" height="18" viewBox="0 0 18 18"><circle cx="9" cy="9" r="7.300" fill="none" stroke="#fff" stroke-width="2"/><path d="M9 8V13" stroke="#fff" stroke-width="1.800"/><circle cx="9" cy="5.500" r="1.100" fill="#fff"/></svg>
<svg class="abs" style="left:1120px;top:646px" width="21" height="16" viewBox="0 0 21 16"><circle cx="7.500" cy="4.500" r="2.700" fill="none" stroke="#fff" stroke-width="2"/><path d="M1.500 14V12.500C1.500 10.500 5 9.500 7.500 9.500S13.500 10.500 13.500 12.500V14Z" fill="none" stroke="#fff" stroke-width="2"/><path d="M13 1.800A2.700 2.700 0 0 1 13 7.200M15.500 9.900C17.500 10.400 19.500 11.200 19.500 12.500V14H16.500" fill="none" stroke="#fff" stroke-width="2"/></svg>
<div class="abs" style="left:1130px;top:627.500px;width:22px;height:15px;border-radius:8px;background:#5f6368;color:#fff;font-size:9.500px;font-weight:bold;line-height:15px;text-align:center">51</div>
<svg class="abs" style="left:1161px;top:645px" width="19" height="19" viewBox="0 0 19 19"><path d="M2.500 1H16.500A1.500 1.500 0 0 1 18 2.500V12.500A1.500 1.500 0 0 1 16.500 14H5L1 18V2.500A1.500 1.500 0 0 1 2.500 1Z" fill="#8ab4f8"/></svg>
<svg class="abs" style="left:1201px;top:645px" width="19" height="19" viewBox="0 0 19 19"><path d="M9.500 1.500L13.200 7.500H5.800Z" fill="none" stroke="#fff" stroke-width="2" stroke-linejoin="round"/><rect x="2" y="10.500" width="6" height="6" fill="none" stroke="#fff" stroke-width="2"/><circle cx="14" cy="13.500" r="3.200" fill="none" stroke="#fff" stroke-width="2"/></svg>
<svg class="abs" style="left:1241px;top:643px" width="20" height="22" viewBox="0 0 20 22"><path d="M5 8V5.500a3.500 3.500 0 0 1 7 0V8" fill="none" stroke="#fff" stroke-width="2"/><path d="M13 8.800H2.800V18.500H8.500" fill="none" stroke="#fff" stroke-width="2" stroke-linejoin="round"/><circle cx="13.500" cy="16" r="4.500" fill="#fff"/><circle cx="13.500" cy="14.700" r="1.300" fill="#202124"/><path d="M11 18.200C11.500 17 15.500 17 16 18.200" fill="none" stroke="#202124" stroke-width="1.200"/></svg>

<div id="taskbar" class="abs"></div>

<!-- ===== taskbar items ===== -->
<svg class="abs" style="left:13px;top:696px" width="15" height="15" viewBox="0 0 15 15"><path d="M0 2L6.500 1.100V7H0ZM7.500 1L15 0V7H7.500ZM0 8H6.500V13.900L0 13ZM7.500 8H15V15L7.500 14Z" fill="#fff"/></svg>
<div class="abs" style="left:40px;top:687px;width:287px;height:33px;background:#f3f3f3"></div>
<svg class="abs" style="left:49px;top:696px" width="15" height="15" viewBox="0 0 15 15"><circle cx="9" cy="6" r="4.300" fill="none" stroke="#222" stroke-width="1.300"/><path d="M6 9L1.500 13.500" stroke="#222" stroke-width="1.400"/></svg>
<div class="abs" id="srch" style="left:73px;top:696px;font-size:13px;line-height:16px;color:#3b3b3b;white-space:nowrap;transform:scaleX(.967);transform-origin:0 0">Щоби почати пошук, введіть запит тут</div>
<!-- opera -->
<svg class="abs" style="left:339px;top:692px" width="20" height="21" viewBox="0 0 20 21"><ellipse cx="10" cy="10.500" rx="9.500" ry="10" fill="#e0141e"/><ellipse cx="10" cy="10.500" rx="4" ry="7" fill="#161d26"/></svg>
<!-- explorer -->
<svg class="abs" style="left:381px;top:694px" width="19" height="17" viewBox="0 0 19 17"><path d="M0 1.500A1 1 0 0 1 1 .5H7L9 2.500H18A1 1 0 0 1 19 3.500V15A1 1 0 0 1 18 16H1A1 1 0 0 1 0 15Z" fill="#f4b92c"/><rect x="0" y="4.500" width="19" height="11.500" rx="1" fill="#fcd55c"/><path d="M4 10H15V16H4Z" fill="#3a8fd8"/><rect x="6.500" y="12.500" width="6" height="3.500" fill="#fcd55c"/></svg>
<!-- chrome active -->
<div class="abs" style="left:412px;top:687px;width:40px;height:33px;background:#3b424a"></div>
<svg class="abs" style="left:421px;top:692px" width="21" height="21" viewBox="0 0 21 21"><circle cx="10.500" cy="10.500" r="10" fill="#fbc116"/><path d="M10.500 10.500L1.840 5.500A10 10 0 0 1 19.160 5.500Z" fill="#e33b2e"/><path d="M10.500 10.500L1.840 5.500A10 10 0 0 0 10.500 20.500L15 13Z" fill="#2da94f"/><path d="M10.500 5.500H19.160" stroke="#e33b2e" stroke-width="0"/><circle cx="10.500" cy="10.500" r="4.600" fill="#fff"/><circle cx="10.500" cy="10.500" r="3.600" fill="#4285f4"/></svg>
<div class="abs" style="left:431px;top:702px;width:12px;height:12px;border-radius:50%;background:#5b3a30;color:#fff;font-size:7px;line-height:12px;text-align:center">x</div>
<!-- powerpoint -->
<svg class="abs" style="left:461px;top:692px" width="23" height="21" viewBox="0 0 23 21"><circle cx="13" cy="10.500" r="10" fill="#e8633c"/><path d="M13 .5A10 10 0 0 1 23 10.500H13Z" fill="#f59a76"/><path d="M13 20.500A10 10 0 0 0 23 10.500H13Z" fill="#c9401f"/><rect x="0" y="4.500" width="12" height="12" rx="1.200" fill="#c43e1c"/><text x="6" y="14" font-size="9" font-weight="bold" fill="#fff" text-anchor="middle" font-family="Liberation Sans, sans-serif">P</text></svg>
<!-- telegram -->
<svg class="abs" style="left:504px;top:692px" width="21" height="21" viewBox="0 0 21 21"><circle cx="10.500" cy="10.500" r="10" fill="#2ba0da"/><path d="M4.500 10.300L15.500 6L13.700 15.200L10.300 12.700L8.700 14.300L8.400 11.700L13.300 7.800L7.300 11.300Z" fill="#fff"/></svg>
<div class="abs" style="left:513px;top:704px;width:15px;height:10px;border-radius:3px;background:#e5352f;color:#fff;font-size:7.500px;line-height:10px;text-align:center">.86</div>
<!-- chrome 2 -->
<svg class="abs" style="left:545px;top:692px" width="21" height="21" viewBox="0 0 21 21"><circle cx="10.500" cy="10.500" r="10" fill="#fbc116"/><path d="M10.500 10.500L1.840 5.500A10 10 0 0 1 19.160 5.500Z" fill="#e33b2e"/><path d="M10.500 10.500L1.840 5.500A10 10 0 0 0 10.500 20.500L15 13Z" fill="#2da94f"/><circle cx="10.500" cy="10.500" r="4.600" fill="#fff"/><circle cx="10.500" cy="10.500" r="3.600" fill="#4285f4"/></svg>
<div class="abs" style="left:555px;top:702px;width:12px;height:12px;border-radius:50%;background:radial-gradient(circle at 50% 45%,#d8b9a6 0 35%,#4a332a 60%)"></div>
<!-- underlines -->
<div class="abs" style="left:374px;top:718px;width:34px;height:2px;background:#76b9ed"></div>
<div class="abs" style="left:412px;top:718px;width:40px;height:2px;background:#76b9ed"></div>
<div class="abs" style="left:457px;top:718px;width:34px;height:2px;background:#76b9ed"></div>
<div class="abs" style="left:498px;top:718px;width:34px;height:2px;background:#76b9ed"></div>
<div class="abs" style="left:539px;top:718px;width:34px;height:2px;background:#76b9ed"></div>
<!-- tray -->
<svg class="abs" style="left:1053px;top:699px" width="11" height="8" viewBox="0 0 11 8"><path d="M1 6.500L5.500 2L10 6.500" fill="none" stroke="#e6e6e6" stroke-width="1.200"/></svg>
<svg class="abs" style="left:1073px;top:696px" width="10" height="15" viewBox="0 0 10 15"><rect x="2.500" y="0.500" width="5" height="9.500" rx="2.200" fill="#e9e9e9"/><path d="M1 8a4 4 0 0 0 8 0M5 12V14M3 14.300H7" fill="none" stroke="#bdbdbd" stroke-width="1"/></svg>
<svg class="abs" style="left:1093px;top:697px" width="13" height="13" viewBox="0 0 13 13"><path d="M2 12A10 10 0 0 1 12 2M5 12A7 7 0 0 1 12 5M8 12A4 4 0 0 1 12 8" fill="none" stroke="#9a9a9a" stroke-width="1.100"/><circle cx="11" cy="11" r="1.300" fill="#e6e6e6"/></svg>
<svg class="abs" style="left:1111px;top:698px" width="16" height="11" viewBox="0 0 16 11"><rect x="2.500" y="2.500" width="12.500" height="6.500" fill="#e6e6e6"/><rect x="1" y="4" width="1.500" height="3.500" fill="#e6e6e6"/><path d="M3 0V3M1.500 1.500H4.500" stroke="#e6e6e6" stroke-width="1"/></svg>
<svg class="abs" style="left:1131px;top:697px" width="16" height="13" viewBox="0 0 16 13"><path d="M1 4.500H3.500L7 1.500V11.500L3.500 8.500H1Z" fill="none" stroke="#e6e6e6" stroke-width="1"/><path d="M9 4.500A3 3 0 0 1 9 8.500M11 2.800A5.500 5.500 0 0 1 11 10.200M13 1A8 8 0 0 1 13 12" fill="none" stroke="#e6e6e6" stroke-width="1"/></svg>
<div class="abs" id="lang" style="left:1155px;top:697px;font-size:11.500px;line-height:14px;color:#fff;white-space:nowrap;transform:scaleX(.8);transform-origin:0 0">УКР</div>
<div class="abs" id="tm" style="left:1184px;top:689px;width:47px;font-size:11.500px;line-height:14px;color:#fff;white-space:nowrap;text-align:center;letter-spacing:-.5px;transform:scaleX(.9)">9:28</div>
<div class="abs" id="dt" style="left:1180px;top:704px;width:55px;font-size:11.500px;line-height:14px;color:#fff;white-space:nowrap;text-align:center;letter-spacing:-.7px;transform:scaleX(.89)">17.05.2024</div>
<svg class="abs" style="left:1246px;top:697px" width="14" height="14" viewBox="0 0 14 14"><path d="M.600.600H13.400V10H8.500L7 11.600L5.500 10H.6Z" fill="none" stroke="#fff" stroke-width="1.100"/></svg>
<div class="abs" style="left:1276px;top:686px;width:1px;height:34px;background:#5a6068"></div>
</body></html>
